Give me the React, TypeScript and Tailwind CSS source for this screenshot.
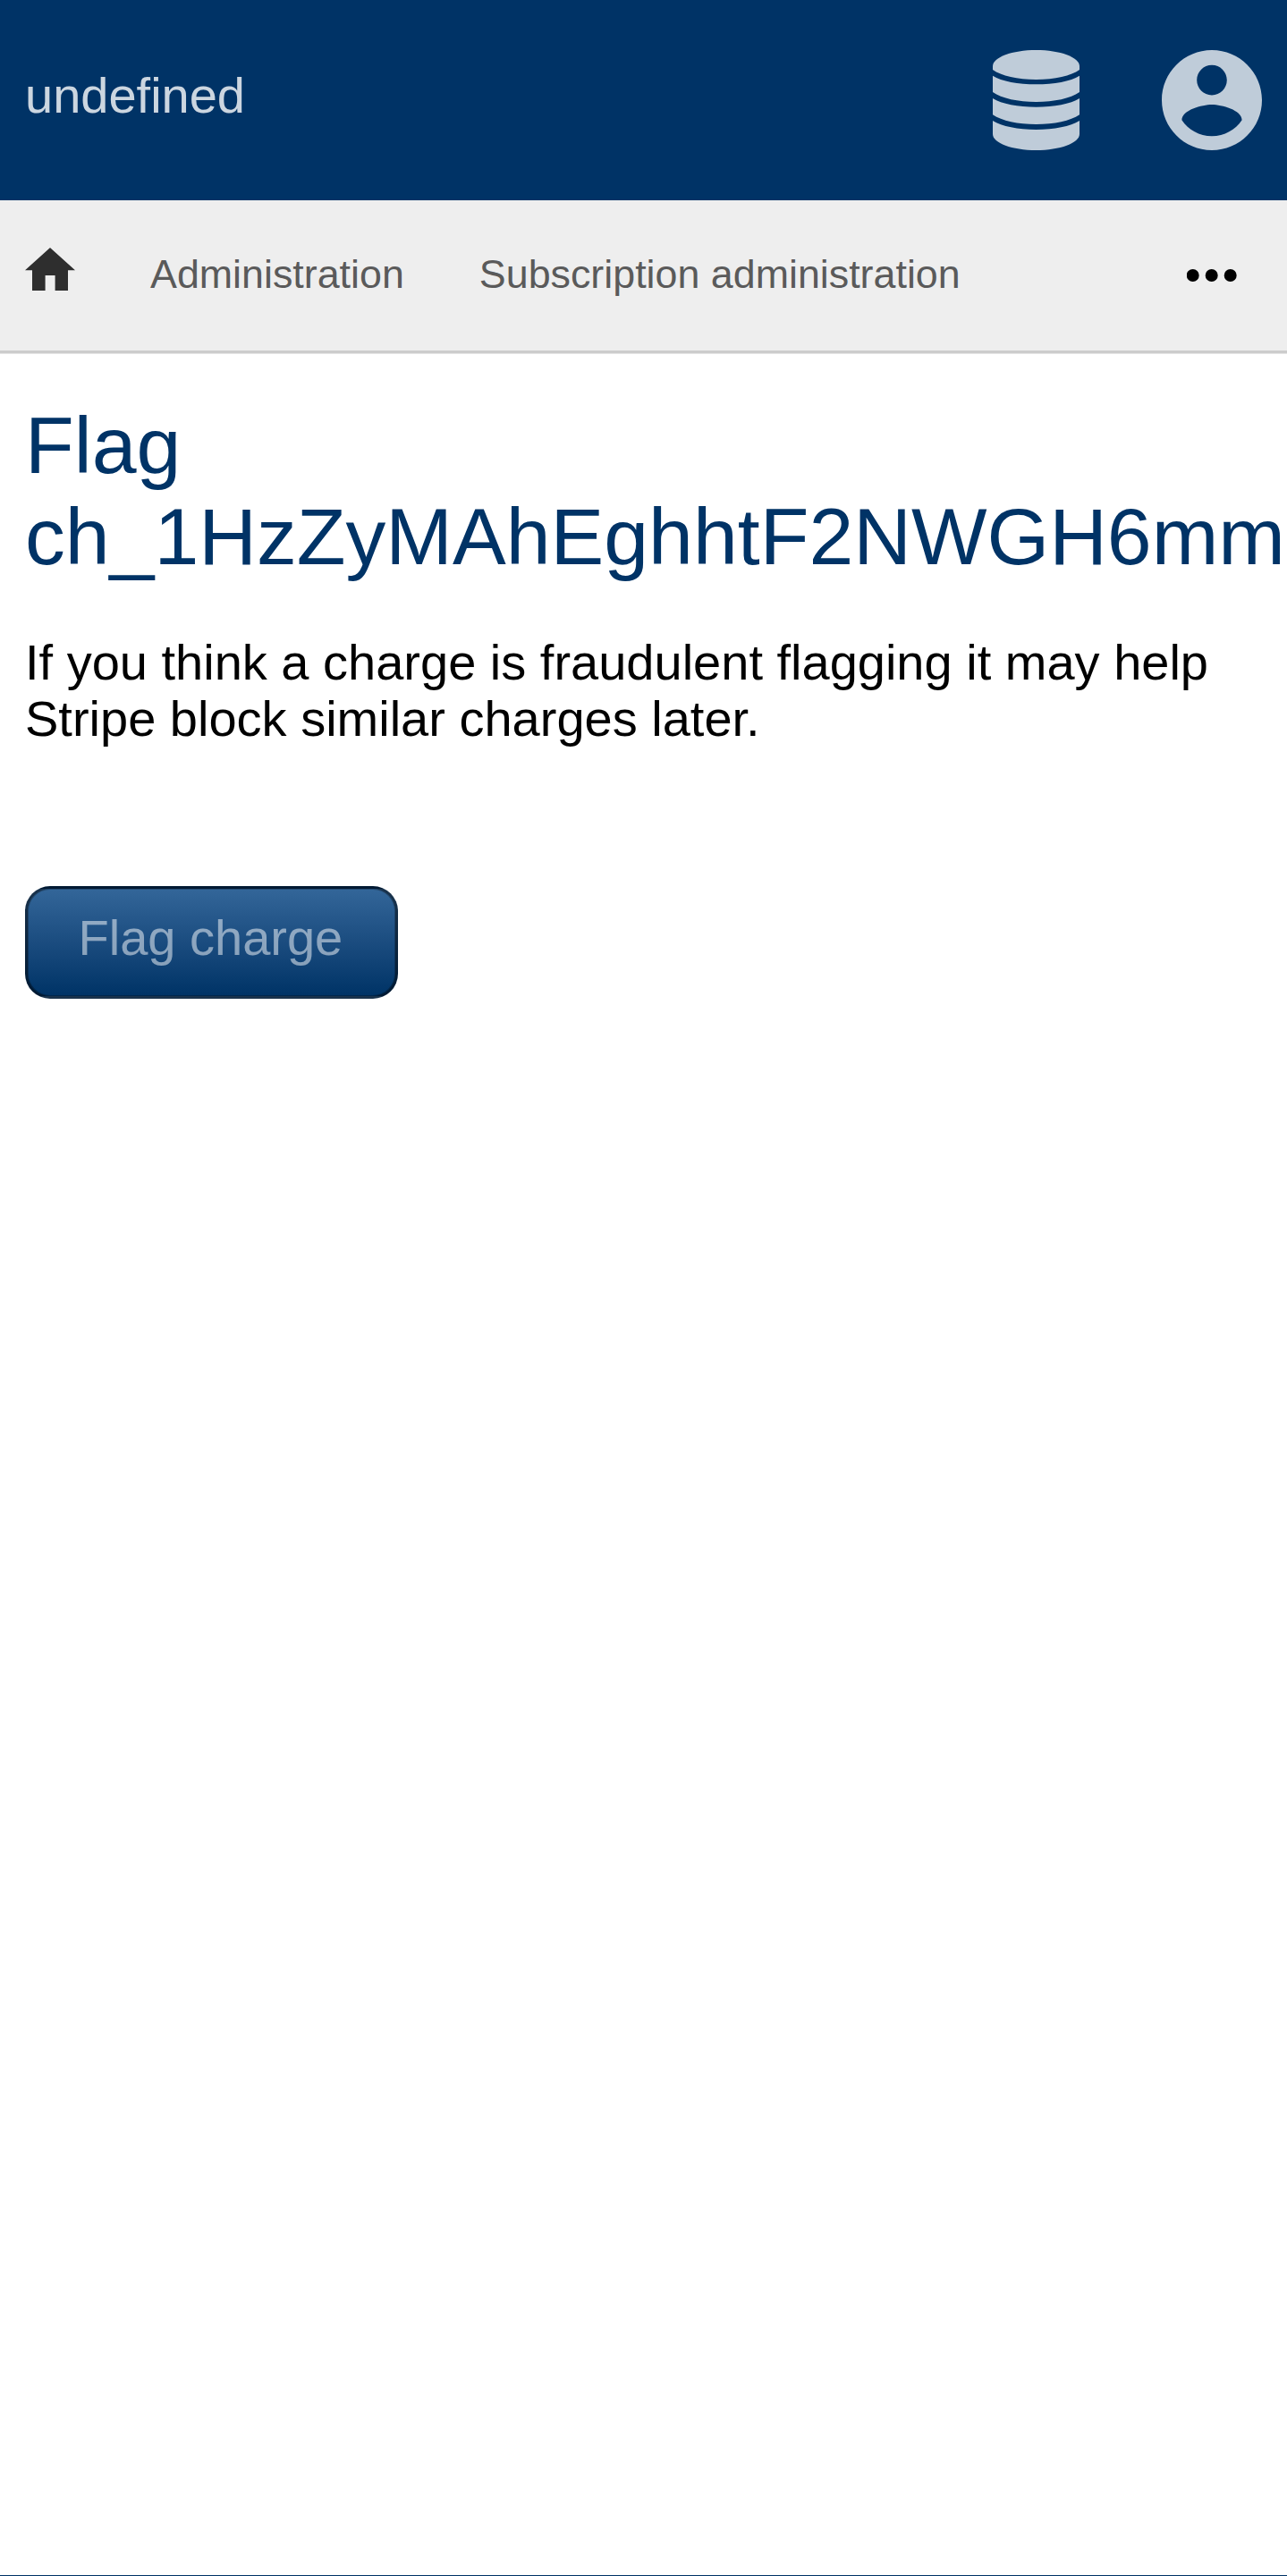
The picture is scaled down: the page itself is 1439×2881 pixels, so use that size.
const DatabaseIcon = () => (
  <svg className="h-[112px] w-[97px]" viewBox="0 0 290 336" preserveAspectRatio="none" fill="currentColor">
    <path d="M0 54C0 24 65 0 145 0S290 24 290 54V66C262 86 207 99 145 99S28 86 0 66Z" />
    <path d="M0 86C30 105 85 115 145 115S260 105 290 86V141C260 162 205 174 145 174S30 162 0 141Z" />
    <path d="M0 162C30 181 85 191 145 191S260 181 290 162V217C260 238 205 249 145 249S30 238 0 217Z" />
    <path d="M0 237C30 256 85 267 145 267S260 256 290 237V282C290 312 225 336 145 336S0 312 0 282Z" />
  </svg>
);

const AccountIcon = () => (
  <svg className="size-[112px]" viewBox="2 2 20 20" fill="currentColor">
    <path d="M12 2C6.48 2 2 6.48 2 12s4.48 10 10 10 10-4.48 10-10S17.52 2 12 2zm0 3c1.66 0 3 1.34 3 3s-1.34 3-3 3-3-1.34-3-3 1.34-3 3-3zm0 14.2c-2.5 0-4.71-1.28-6-3.22.03-1.99 4-3.08 6-3.08 1.99 0 5.97 1.09 6 3.08-1.29 1.94-3.5 3.22-6 3.22z" />
  </svg>
);

const HomeIcon = () => (
  <svg className="h-12 w-14" viewBox="0 0 56 48" fill="#2e2e2e">
    <path d="M28 0L0 25.2H8V48H22.6V31H33.6V48H48V25.2H56Z" />
  </svg>
);

const DotsIcon = () => (
  <svg className="h-3.5 w-14" viewBox="0 0 56 14" fill="#000">
    <circle cx="6.7" cy="7" r="7" />
    <circle cx="27.7" cy="7" r="7" />
    <circle cx="48.7" cy="7" r="7" />
  </svg>
);

export default function App() {
  return (
    <div className="flex h-[2881px] w-[1439px] flex-col overflow-hidden border-b border-[#003366] bg-white font-['Liberation_Sans',Arial,sans-serif] text-[56px] leading-[63px] text-black">
      <header className="flex h-[224px] shrink-0 items-center justify-between bg-[#003366] px-7">
        <a className="-mt-[11px] text-white/80">undefined</a>
        <div className="flex items-center gap-[92px] text-[#bfccd9]">
          <DatabaseIcon />
          <AccountIcon />
        </div>
      </header>
      <nav className="flex h-[171px] shrink-0 items-center border-b-[3px] border-[#cccccc] bg-[#eeeeee] pr-14 pl-7 text-[44.8px] text-[#5a5a5a] shadow-[0_1px_0_#e5e5e5]">
        <div className="-mt-[14px]">
          <HomeIcon />
        </div>
        <a className="-mt-[3px] ml-[84px]">Administration</a>
        <a className="-mt-[3px] ml-[84px]">Subscription administration</a>
        <div className="ml-auto">
          <DotsIcon />
        </div>
      </nav>
      <main className="px-7 pt-[52px]">
        <h1 className="text-[89.6px] leading-[102px] text-[#003366]">
          Flag ch_1HzZyMAhEghhtF2NWGH6mm
        </h1>
        <p className="mt-[58px]">
          If you think a charge is fraudulent flagging it may help Stripe block similar charges later.
        </p>
        <button className="mt-[156px] block h-[126px] w-[416.5px] rounded-[28px] border-[3px] border-black/50 bg-linear-to-b from-[#336699] to-[#003366] pb-3 pl-[56.5px] text-left text-white/50 shadow-[inset_0_0_0_1px_rgba(0,0,0,0.25)]">
          Flag charge
        </button>
      </main>
    </div>
  );
}
